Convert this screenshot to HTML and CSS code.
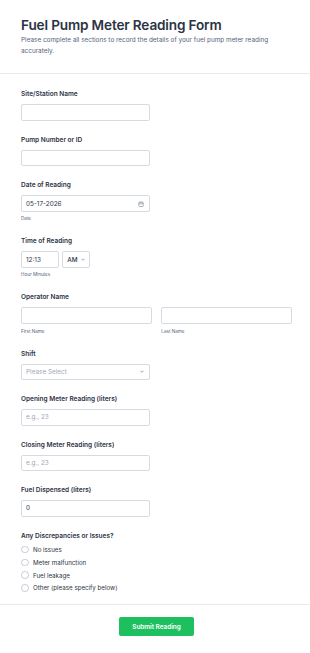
FILE: index.html
```html
<!DOCTYPE html>
<html lang="en">
	<head>
		<meta charset="UTF-8">
		<meta name="viewport" content="width=device-width, initial-scale=1.0">
		<title>Fuel Pump Meter Reading Form</title>
		<link rel="stylesheet" href="styles.css">
	</head>
	<body>
		<div class="form-header">
			<h1 class="form-title">Fuel Pump Meter Reading Form</h1>
			<p class="form-desc">Please complete all sections to record the details of your fuel pump meter reading accurately.</p>
		</div>

		<form class="form-body">
			<div class="field">
				<label class="field-label" for="site">Site/Station Name</label>
				<input id="site" class="text-input" type="text">
			</div>

			<div class="field">
				<label class="field-label" for="pump">Pump Number or ID</label>
				<input id="pump" class="text-input" type="text">
			</div>

			<div class="field">
				<label class="field-label">Date of Reading</label>
				<div class="box-input">
					<span>05-17-2026</span>
					<svg class="cal-icon" width="6" height="6" viewBox="0 0 12 12" fill="none" stroke="#8f96a3" stroke-width="1.4">
						<rect x="1.5" y="2.5" width="9" height="8.5" rx="1.5"/>
						<path d="M4 1v3M8 1v3M1.5 5.5h9"/>
					</svg>
				</div>
				<div class="sub-label">Date</div>
			</div>

			<div class="field">
				<label class="field-label">Time of Reading</label>
				<div class="time-row">
					<div class="box-input time-box"><span>12:13</span></div>
					<div class="box-input ampm-box">
						<span>AM</span>
						<svg width="4" height="3" viewBox="0 0 8 5" fill="none" stroke="#57647e" stroke-width="1.2"><path d="M1 1l3 3 3-3"/></svg>
					</div>
				</div>
				<div class="sub-label">Hour Minutes</div>
			</div>

			<div class="field">
				<label class="field-label">Operator Name</label>
				<div class="name-grid">
					<div>
						<input class="text-input wide" type="text">
						<div class="sub-label">First Name</div>
					</div>
					<div>
						<input class="text-input wide" type="text">
						<div class="sub-label">Last Name</div>
					</div>
				</div>
			</div>

			<div class="field">
				<label class="field-label">Shift</label>
				<div class="box-input">
					<span class="placeholder">Please Select</span>
					<svg width="4" height="3" viewBox="0 0 8 5" fill="none" stroke="#57647e" stroke-width="1.2"><path d="M1 1l3 3 3-3"/></svg>
				</div>
			</div>

			<div class="field">
				<label class="field-label" for="opening">Opening Meter Reading (liters)</label>
				<input id="opening" class="text-input" type="text" placeholder="e.g., 23">
			</div>

			<div class="field">
				<label class="field-label" for="closing">Closing Meter Reading (liters)</label>
				<input id="closing" class="text-input" type="text" placeholder="e.g., 23">
			</div>

			<div class="field">
				<label class="field-label" for="dispensed">Fuel Dispensed (liters)</label>
				<input id="dispensed" class="text-input" type="text" value="0">
			</div>

			<div class="field last">
				<label class="field-label">Any Discrepancies or Issues?</label>
				<div class="radio-list">
					<div class="radio-row"><span class="radio"></span>No issues</div>
					<div class="radio-row"><span class="radio"></span>Meter malfunction</div>
					<div class="radio-row"><span class="radio"></span>Fuel leakage</div>
					<div class="radio-row"><span class="radio"></span>Other (please specify below)</div>
				</div>
			</div>
		</form>

		<div class="form-footer">
			<button class="submit-btn" type="button">Submit Reading</button>
		</div>
	</body>
</html>
```

FILE: styles.css
```css
:root {
    --text-dark: #2c3345;
    --text-muted: #57647e;
    --placeholder: #a0a7b5;
    --border: #d6dae2;
    --divider: #e8eaee;
    --green: #1dbf5e;
}

* {
    box-sizing: border-box;
    margin: 0;
    padding: 0;
}

body {
    font-family: Inter, 'Noto Sans', sans-serif;
    color: var(--text-dark);
    background: #fff;
}

/* Header */
.form-header {
    padding: 16.3px 21px 15.2px;
    border-bottom: 1px solid var(--divider);
}

.form-title {
    font-size: 13.6px;
    font-weight: 600;
    line-height: 18px;
    letter-spacing: -0.15px;
    margin-bottom: 1.2px;
}

.form-desc {
    font-size: 6.4px;
    line-height: 11px;
    color: var(--text-muted);
}

/* Fields */
.form-body {
    padding: 15.6px 18px 9.3px 21px;
}

.field {
    margin-bottom: 14px;
}

.field.last {
    margin-bottom: 0;
}

.field-label {
    display: block;
    font-size: 6.5px;
    font-weight: 600;
    line-height: 10px;
    margin-bottom: 5px;
}

.text-input,
.box-input {
    display: block;
    width: 129px;
    height: 16.5px;
    border: 1px solid var(--border);
    border-radius: 2px;
    background: #fff;
    font-family: inherit;
    font-size: 6.4px;
    color: var(--text-dark);
    padding: 0 4px;
    outline: none;
}

.text-input::placeholder,
.placeholder {
    color: var(--placeholder);
}

.box-input {
    display: flex;
    align-items: center;
    justify-content: space-between;
    padding-right: 5px;
}

.cal-icon {
    margin-right: 0.5px;
}

.time-row {
    display: flex;
    gap: 3.6px;
}

.time-box {
    width: 37.7px;
}

.ampm-box {
    width: 27.7px;
    padding-right: 4px;
    font-weight: 500;
}

.sub-label {
    font-size: 4.6px;
    line-height: 7px;
    margin-top: 3.6px;
    color: var(--text-muted);
}

.name-grid {
    display: grid;
    grid-template-columns: 1fr 1fr;
    gap: 9.6px;
}

.text-input.wide {
    width: 100%;
}

/* Radios */
.radio-list {
    margin-top: -2.3px;
}

.radio-row {
    display: flex;
    align-items: center;
    gap: 4.3px;
    height: 12.75px;
    font-size: 6.2px;
    color: var(--text-dark);
}

.radio {
    width: 7.7px;
    height: 7.7px;
    border: 1px solid #c5cad4;
    border-radius: 50%;
}

/* Footer */
.form-footer {
    border-top: 1px solid var(--divider);
    padding: 12.3px 18px 16px 21px;
    display: flex;
    justify-content: center;
}

.submit-btn {
    width: 74.4px;
    height: 19.4px;
    border: none;
    border-radius: 2px;
    background-color: var(--green);
    color: #fff;
    font-family: inherit;
    font-size: 6.4px;
    font-weight: 600;
    cursor: pointer;
}
```
